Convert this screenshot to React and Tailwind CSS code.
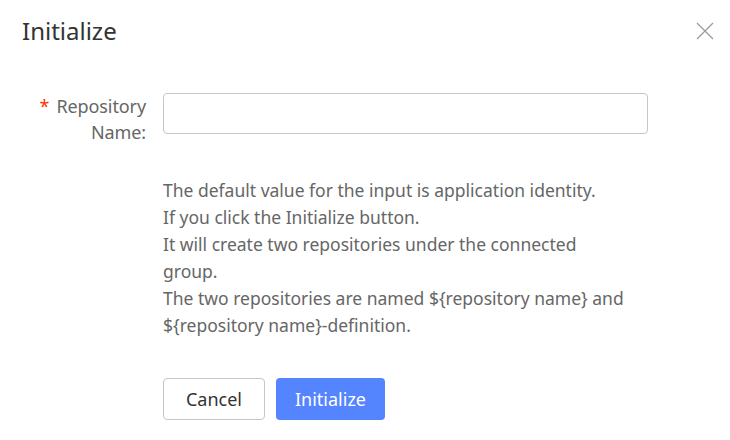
export default function App() {
  return (
    <div className="w-[730px] h-[440px] bg-white font-['Noto_Sans','Liberation_Sans',sans-serif] text-[#666]">
      {/* HEADER */}
      <div className="flex items-center justify-between pl-[22px] pr-[16px] pt-[15px]">
        <h1 className="text-[24px] leading-[32px] text-[#333]">Initialize</h1>
        <button className="w-[18px] h-[18px] text-[#999]">
          <svg viewBox="0 0 18 18" className="w-[18px] h-[18px]" fill="none" stroke="currentColor" strokeWidth="1.2">
            <path d="M1 1L17 17M17 1L1 17" />
          </svg>
        </button>
      </div>

      {/* FORM */}
      <div className="flex mt-[46px]">
        <label className="w-[146px] text-right text-[18px] leading-[26px] tracking-[-0.1px]">
          <span className="text-[#ff3000] mr-[7px]">*</span>Repository
          <br />Name:
        </label>
        <div className="ml-[17px] flex flex-col">
          <input className="w-[485px] h-[41px] border border-[#c4c6cf] rounded-[4px] px-3 outline-none" />
          <div className="mt-[43px] w-[472px] text-[17.5px] leading-[27px] text-[#666]">
            <p>The default value for the input is application identity.</p>
            <p>If you click the Initialize button.</p>
            <p>It will create two repositories under the connected group.</p>
            <p>The two repositories are named {"${repository name}"} and {"${repository name}"}-definition.</p>
          </div>
          <div className="flex gap-[11px] mt-[39px]">
            <button className="w-[102px] h-[42px] border border-[#c4c6cf] rounded-[4px] text-[18px] text-[#333] bg-white">Cancel</button>
            <button className="w-[109px] h-[42px] rounded-[4px] text-[18px] text-white bg-[#5584ff]">Initialize</button>
          </div>
        </div>
      </div>
    </div>
  );
}
